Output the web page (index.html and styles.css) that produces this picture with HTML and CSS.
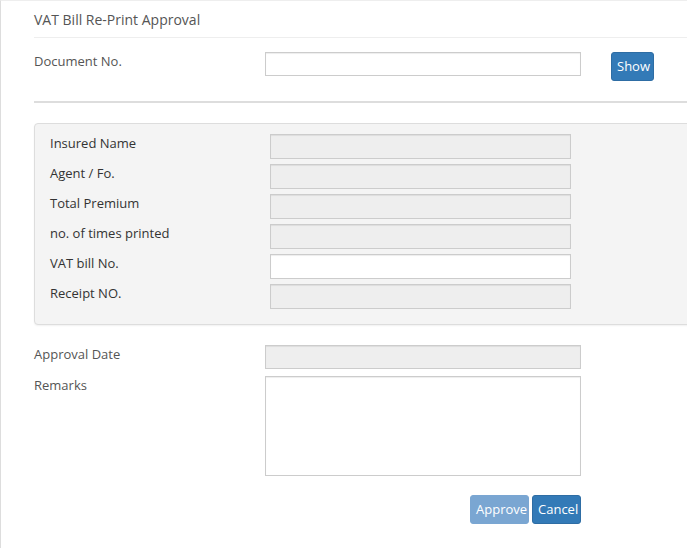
FILE: index.html
```html
<!DOCTYPE html>
<html>
<head>
<meta charset="utf-8">
<link rel="stylesheet" href="styles.css">
</head>
<body>
<div class="page">
  <div class="title">VAT Bill Re-Print Approval</div>
  <div class="row doc-row">
    <label class="lbl">Document No.</label>
    <input class="field" type="text">
    <button class="btn show">Show</button>
  </div>
  <hr class="sep">
  <div class="panel">
    <div class="prow"><label class="plbl">Insured Name</label><input class="pfield ro" type="text" readonly></div>
    <div class="prow"><label class="plbl">Agent / Fo.</label><input class="pfield ro" type="text" readonly></div>
    <div class="prow"><label class="plbl">Total Premium</label><input class="pfield ro" type="text" readonly></div>
    <div class="prow"><label class="plbl">no. of times printed</label><input class="pfield ro" type="text" readonly></div>
    <div class="prow"><label class="plbl">VAT bill No.</label><input class="pfield" type="text"></div>
    <div class="prow"><label class="plbl">Receipt NO.</label><input class="pfield ro" type="text" readonly></div>
  </div>
  <div class="row date-row">
    <label class="lbl">Approval Date</label>
    <input class="field ro" type="text" readonly>
  </div>
  <div class="row remarks-row">
    <label class="lbl">Remarks</label>
    <textarea class="area"></textarea>
  </div>
  <div class="actions">
    <button class="btn approve">Approve</button>
    <button class="btn cancel">Cancel</button>
  </div>
</div>
</body>
</html>
```
FILE: styles.css
```css
html, body {
  margin: 0;
  padding: 0;
  overflow: hidden;
  background: #fff;
}
body {
  font-family: "Open Sans", "Liberation Sans", sans-serif;
  font-size: 13px;
  color: #555;
}
.page {
  border-left: 1px solid #ddd;
  border-top: 1px solid #eee;
  min-height: 548px;
  padding-left: 33px;
  box-sizing: border-box;
}
.title {
  font-size: 14px;
  line-height: 20px;
  padding-top: 9px;
  padding-bottom: 7px;
  border-bottom: 1px solid #eee;
  color: #555;
}
.row {
  display: flex;
  align-items: flex-start;
}
.lbl {
  width: 231px;
  line-height: 18px;
  color: #555;
}
.doc-row {
  margin-top: 14px;
}
.field {
  width: 316px;
  height: 24px;
  box-sizing: border-box;
  border: 1px solid #ccc;
  box-shadow: inset 0 1px 1px rgba(0,0,0,.075);
  background: #fff;
  margin: 0;
  padding: 0 6px;
  font: inherit;
}
.ro {
  background: #eee;
}
.btn {
  font-family: inherit;
  font-size: 13px;
  color: #fff;
  background: #337ab7;
  border: 1px solid #2e6da4;
  border-radius: 3px;
  height: 29px;
  padding: 0 5px;
  margin: 0;
  line-height: 27px;
}
.show {
  margin-left: 30px;
  width: 43px;
}
.sep {
  margin: 20px 0 0 0;
  border: 0;
  border-top: 2px solid #ddd;
  height: 0;
}
.panel {
  margin-top: 20px;
  width: 700px;
  background: #f4f4f4;
  border: 1px solid #ddd;
  border-radius: 4px;
  box-shadow: 0 1px 2px rgba(0,0,0,.06);
  padding: 10px 15px 15px 15px;
  display: flex;
  flex-direction: column;
  gap: 5px;
}
.prow {
  display: flex;
  align-items: flex-start;
}
.plbl {
  width: 220px;
  line-height: 18px;
  color: #333;
}
.pfield {
  width: 301px;
  height: 25px;
  box-sizing: border-box;
  border: 1px solid #ccc;
  box-shadow: inset 0 1px 1px rgba(0,0,0,.075);
  background: #fff;
  margin: 0;
  padding: 0 6px;
  font: inherit;
}
.pfield.ro {
  background: #eee;
}
.date-row {
  margin-top: 20px;
}
.remarks-row {
  margin-top: 7px;
}
.area {
  width: 316px;
  height: 100px;
  box-sizing: border-box;
  border: 1px solid #ccc;
  box-shadow: inset 0 1px 1px rgba(0,0,0,.075);
  margin: 0;
  padding: 4px 6px;
  resize: none;
  font: inherit;
}
.actions {
  width: 547px;
  display: flex;
  justify-content: flex-end;
  gap: 3px;
  margin-top: 19px;
}
.approve {
  width: 59px;
  background: #7aa6d2;
  border-color: #7aa6d2;
}
.cancel {
  width: 49px;
}
```
